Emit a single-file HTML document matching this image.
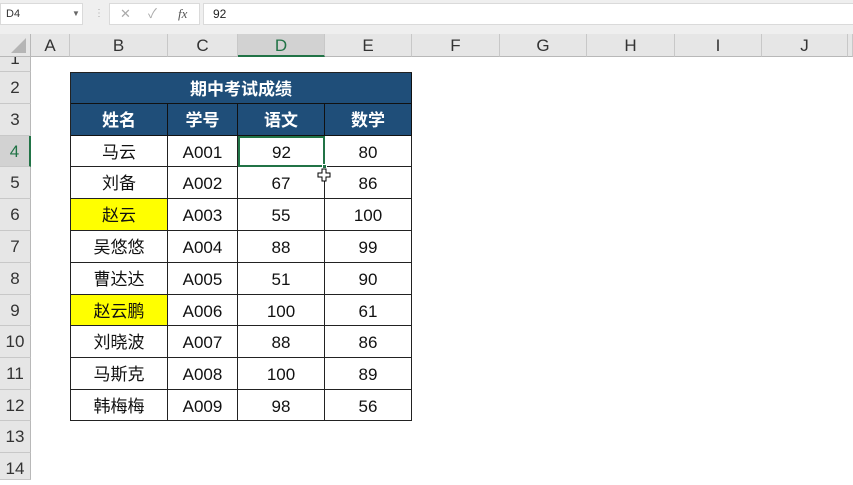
<!DOCTYPE html>
<html><head><meta charset="utf-8"><style>
*{margin:0;padding:0;box-sizing:border-box}
body{width:853px;height:480px;overflow:hidden;background:#fff;position:relative;font-family:"Liberation Sans","Noto Sans CJK SC",sans-serif}
.a{position:absolute}
.top{left:0;top:0;width:853px;height:34px;background:#efefef}
.box{background:#fff;border:1px solid #dadada}
.ch{top:34px;height:23px;background:#e6e6e6;border-right:1px solid #c8c8c8;border-bottom:1px solid #b8b8b8;text-align:center;font-size:17px;line-height:23px;color:#333}
.rh{left:0;width:31px;background:#e6e6e6;border-bottom:1px solid #c8c8c8;border-right:1px solid #b8b8b8;text-align:center;font-size:17px;color:#333}
.c{border-right:1px solid #222;border-bottom:1px solid #222;text-align:center;font-size:17px;color:#111;display:flex;align-items:center;justify-content:center;line-height:1;padding-top:2px}
.h{background:#1f4e79;color:#fff;font-weight:bold;border-color:#111}
.y{background:#ffff00}
</style></head><body>
<div class="a top"></div>
<div class="a box" style="left:0;top:3px;width:83px;height:22px;font-size:11px;line-height:20px;padding-left:5px;color:#333">D4<span style="position:absolute;left:71px;top:0;font-size:8px;color:#666">▼</span></div>
<div class="a" style="left:94px;top:8px;color:#aaa;font-size:10px">⋮</div>
<div class="a box" style="left:109px;top:3px;width:91px;height:22px;color:#aaa;font-size:13px;line-height:20px"><span style="position:absolute;left:10px">✕</span><span style="position:absolute;left:38px">✓</span><span style="position:absolute;left:68px;font-style:italic;font-family:'Liberation Serif',serif;color:#555">fx</span></div>
<div class="a box" style="left:203px;top:3px;width:652px;height:22px;font-size:12px;line-height:20px;padding-left:9px;color:#222">92</div>
<div class="a" style="left:0;top:34px;width:31px;height:23px;background:#e6e6e6;border-right:1px solid #b8b8b8;border-bottom:1px solid #b8b8b8"><div class="a" style="right:4px;bottom:3px;width:0;height:0;border-left:15px solid transparent;border-bottom:15px solid #b5b5b5"></div></div>
<div class="a ch" style="left:31px;width:39px">A</div>
<div class="a ch" style="left:70px;width:98px">B</div>
<div class="a ch" style="left:168px;width:70px">C</div>
<div class="a ch" style="left:238px;width:87px;background:#d2d2d2;border-bottom:2px solid #217346;color:#217346">D</div>
<div class="a ch" style="left:325px;width:87px">E</div>
<div class="a ch" style="left:412px;width:88px">F</div>
<div class="a ch" style="left:500px;width:87px">G</div>
<div class="a ch" style="left:587px;width:88px">H</div>
<div class="a ch" style="left:675px;width:87px">I</div>
<div class="a ch" style="left:762px;width:86px">J</div>
<div class="a ch" style="left:848px;width:5px"></div>
<div class="a rh" style="top:57px;height:15px;line-height:4px;overflow:hidden">1</div>
<div class="a rh" style="top:72px;height:32px;line-height:32px">2</div>
<div class="a rh" style="top:104px;height:32px;line-height:32px">3</div>
<div class="a rh" style="top:136px;height:31px;line-height:31px;background:#d2d2d2;color:#217346;border-right:2px solid #217346">4</div>
<div class="a rh" style="top:167px;height:32px;line-height:32px">5</div>
<div class="a rh" style="top:199px;height:32px;line-height:32px">6</div>
<div class="a rh" style="top:231px;height:32px;line-height:32px">7</div>
<div class="a rh" style="top:263px;height:32px;line-height:32px">8</div>
<div class="a rh" style="top:295px;height:31px;line-height:31px">9</div>
<div class="a rh" style="top:326px;height:32px;line-height:32px">10</div>
<div class="a rh" style="top:358px;height:32px;line-height:32px">11</div>
<div class="a rh" style="top:390px;height:31px;line-height:31px">12</div>
<div class="a rh" style="top:421px;height:32px;line-height:32px">13</div>
<div class="a rh" style="top:453px;height:27px;line-height:32px">14</div>

<div class="a" style="left:70px;top:72px;width:1px;height:349px;background:#222"></div>
<div class="a" style="left:70px;top:72px;width:342px;height:1px;background:#222"></div>
<div class="a c h" style="left:71px;top:73px;width:341px;height:31px">期中考试成绩</div>

<div class="a c h" style="left:71px;top:104px;width:97px;height:32px">姓名</div>
<div class="a c h" style="left:168px;top:104px;width:70px;height:32px">学号</div>
<div class="a c h" style="left:238px;top:104px;width:87px;height:32px">语文</div>
<div class="a c h" style="left:325px;top:104px;width:87px;height:32px">数学</div>

<div class="a c" style="left:71px;top:136px;width:97px;height:31px">马云</div>
<div class="a c" style="left:168px;top:136px;width:70px;height:31px">A001</div>
<div class="a c" style="left:238px;top:136px;width:87px;height:31px;border:2px solid #217346">92</div>
<div class="a c" style="left:325px;top:136px;width:87px;height:31px">80</div>

<div class="a c" style="left:71px;top:167px;width:97px;height:32px">刘备</div>
<div class="a c" style="left:168px;top:167px;width:70px;height:32px">A002</div>
<div class="a c" style="left:238px;top:167px;width:87px;height:32px">67</div>
<div class="a c" style="left:325px;top:167px;width:87px;height:32px">86</div>

<div class="a c y" style="left:71px;top:199px;width:97px;height:32px">赵云</div>
<div class="a c" style="left:168px;top:199px;width:70px;height:32px">A003</div>
<div class="a c" style="left:238px;top:199px;width:87px;height:32px">55</div>
<div class="a c" style="left:325px;top:199px;width:87px;height:32px">100</div>

<div class="a c" style="left:71px;top:231px;width:97px;height:32px">吴悠悠</div>
<div class="a c" style="left:168px;top:231px;width:70px;height:32px">A004</div>
<div class="a c" style="left:238px;top:231px;width:87px;height:32px">88</div>
<div class="a c" style="left:325px;top:231px;width:87px;height:32px">99</div>

<div class="a c" style="left:71px;top:263px;width:97px;height:32px">曹达达</div>
<div class="a c" style="left:168px;top:263px;width:70px;height:32px">A005</div>
<div class="a c" style="left:238px;top:263px;width:87px;height:32px">51</div>
<div class="a c" style="left:325px;top:263px;width:87px;height:32px">90</div>

<div class="a c y" style="left:71px;top:295px;width:97px;height:31px">赵云鹏</div>
<div class="a c" style="left:168px;top:295px;width:70px;height:31px">A006</div>
<div class="a c" style="left:238px;top:295px;width:87px;height:31px">100</div>
<div class="a c" style="left:325px;top:295px;width:87px;height:31px">61</div>

<div class="a c" style="left:71px;top:326px;width:97px;height:32px">刘晓波</div>
<div class="a c" style="left:168px;top:326px;width:70px;height:32px">A007</div>
<div class="a c" style="left:238px;top:326px;width:87px;height:32px">88</div>
<div class="a c" style="left:325px;top:326px;width:87px;height:32px">86</div>

<div class="a c" style="left:71px;top:358px;width:97px;height:32px">马斯克</div>
<div class="a c" style="left:168px;top:358px;width:70px;height:32px">A008</div>
<div class="a c" style="left:238px;top:358px;width:87px;height:32px">100</div>
<div class="a c" style="left:325px;top:358px;width:87px;height:32px">89</div>

<div class="a c" style="left:71px;top:390px;width:97px;height:31px">韩梅梅</div>
<div class="a c" style="left:168px;top:390px;width:70px;height:31px">A009</div>
<div class="a c" style="left:238px;top:390px;width:87px;height:31px">98</div>
<div class="a c" style="left:325px;top:390px;width:87px;height:31px">56</div>

<div class="a" style="left:322px;top:164px;width:5px;height:5px;background:#217346;border:1px solid #fff"></div>
<svg class="a" style="left:317px;top:168px" width="14" height="16" viewBox="0 0 14 16"><path d="M5 1h4v4h4v4h-4v4h-4v-4h-4v-4h4z" fill="#fff" stroke="#000" stroke-width="1"/></svg>
</body></html>
